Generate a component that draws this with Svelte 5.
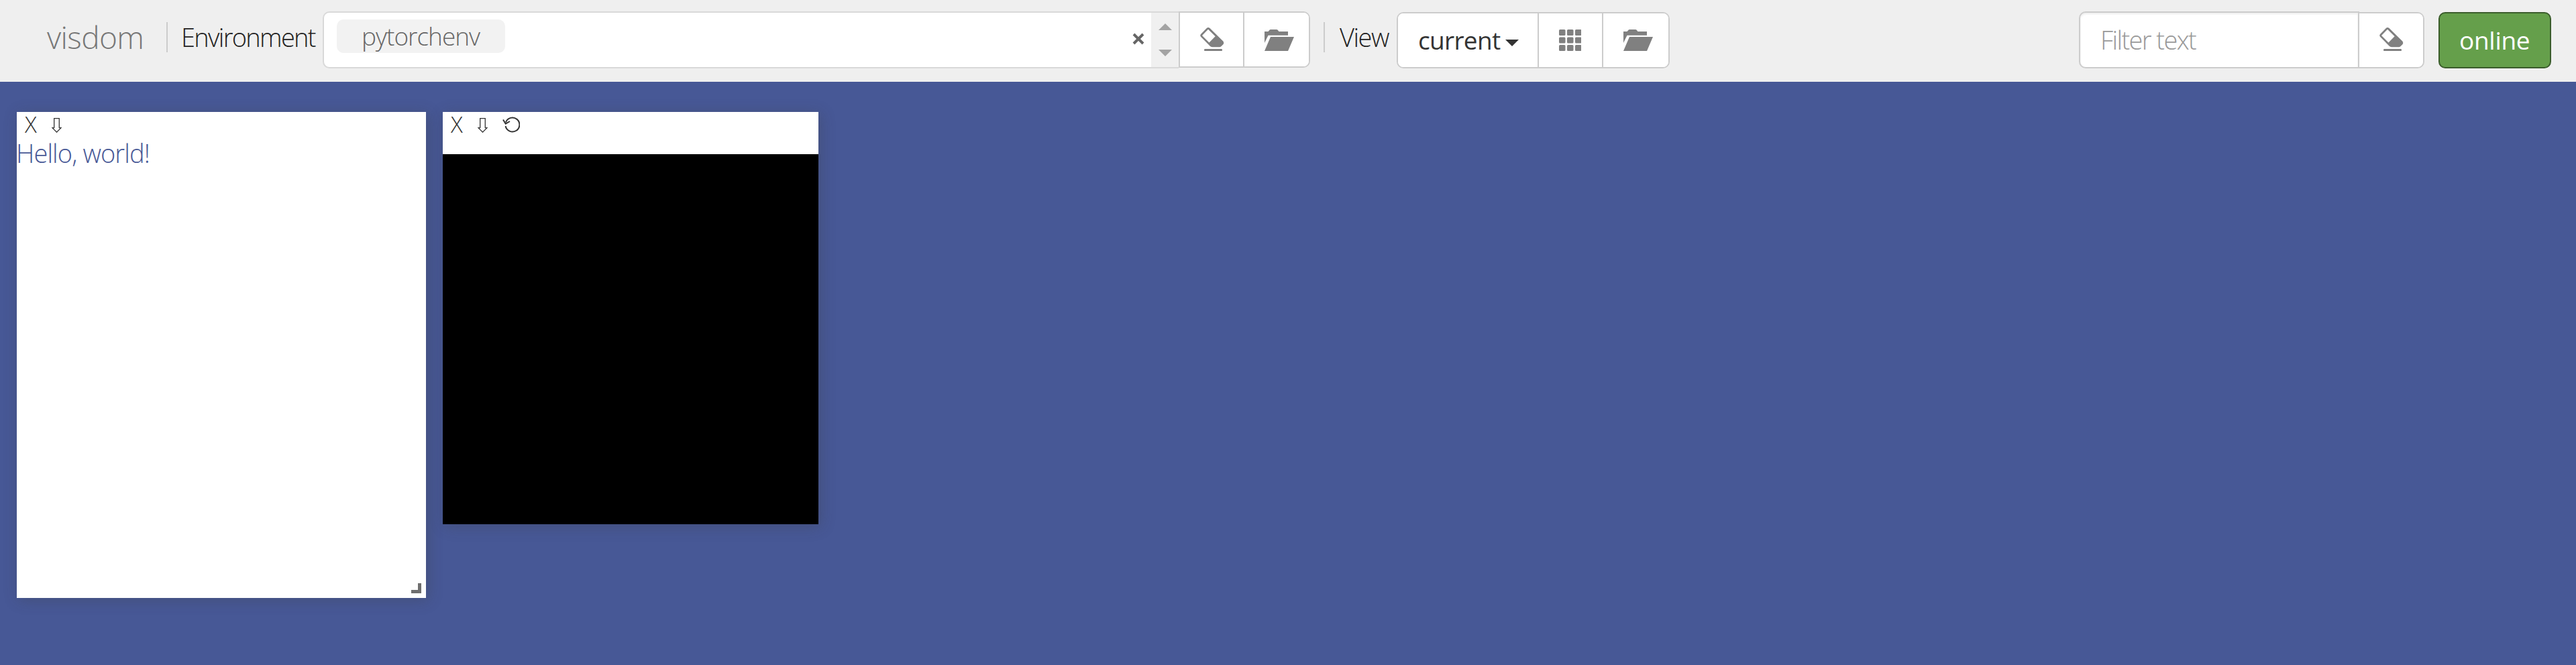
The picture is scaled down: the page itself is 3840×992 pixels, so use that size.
<script>
  const panes = [
    { kind: 'text', text: 'Hello, world!' },
    { kind: 'image', text: '' }
  ];
  const dots = [0, 1, 2];
</script>

{#snippet eraser()}
  <svg class="eraser" viewBox="0 0 36 36" width="36" height="36">
    <path fill="#808080" fill-rule="evenodd" d="M12 0 Q13.3 0 14.5 1 L34.3 20.6 Q36 23 34.6 25 L31 28.5 Q30 29.3 29 29.3 H18 Q16 29 15 28 L1.2 14 Q-.6 12 1 10 L9.8 1 Q11 0 12 0 Z M12 2.7 L3 12 L13.5 22.5 L22.6 13.2 Z" />
    <path fill="#808080" d="M7 32 H32 Q33 32 33 33.500 Q33 35 32 35 H7 Q6 35 6 33.500 Q6 32 7 32 Z" />
  </svg>
{/snippet}

{#snippet folder()}
  <svg class="folder" viewBox="0 0 44 32" width="44" height="32">
    <path fill="#808080" d="M0 3 H5.500 L7.500 .7 Q8 0 9 0 H18 Q19 0 19.700 .8 L21.500 3 H35 V8.700 H5.500 L0 20 Z M9 11 H44 L35 32 H0 Z" />
  </svg>
{/snippet}

<div class="page">
  <header>
    <span class="brand"><span class="t">visdom</span></span>
    <i class="sep"></i>
    <span class="label env"><span class="t">Environment</span></span>
    <div class="select">
      <span class="tag"><span class="t">pytorchenv</span></span>
      <svg class="clear" viewBox="0 0 18 18" width="18" height="18"><path d="M2 2 L16 16 M16 2 L2 16" stroke="#666" stroke-width="4" /></svg>
      <div class="spin">
        <svg viewBox="0 0 20 10" width="20" height="10"><path d="M0 10 L10 0 L20 10 Z" fill="#a3a3a3" /></svg>
        <svg viewBox="0 0 20 10" width="20" height="10"><path d="M0 0 H20 L10 10 Z" fill="#a3a3a3" /></svg>
      </div>
    </div>
    <div class="group first">
      <button class="e">{@render eraser()}</button>
      <button class="f">{@render folder()}</button>
    </div>
    <i class="sep second"></i>
    <span class="label view"><span class="t">View</span></span>
    <div class="group views">
      <button class="cur"><span class="t">current</span><svg viewBox="0 0 20 10" width="20" height="10"><path d="M0 0 H20 L10 10 Z" fill="#333" /></svg></button>
      <button class="g">
        <svg viewBox="0 0 33 32" width="33" height="32">
          {#each dots as r}{#each dots as c}<rect x={c * 12} y={r * 11.5} width="9.500" height="9" rx="1.5" fill="#808080" />{/each}{/each}
        </svg>
      </button>
      <button class="f">{@render folder()}</button>
    </div>
    <div class="filter"><span class="t">Filter text</span></div>
    <div class="group clearfilter"><button class="e">{@render eraser()}</button></div>
    <div class="online"><span class="t">online</span></div>
  </header>
  <main>
    {#each panes as pane}
      <section class={pane.kind}>
        <div class="bar">
          <span class="x">X</span>
          <svg class="down" viewBox="0 0 15 22" width="15" height="22"><path d="M3.700 .7 H11.300 V14.700 H14 L7.500 21.200 L1 14.700 H3.700 Z" fill="none" stroke="#333" stroke-width="1.300" /></svg>
          {#if pane.kind === 'image'}
            <svg class="reset" viewBox="0 0 26 24" width="26" height="24"><path d="M5 8.500 A10.500 10.500 0 1 1 4.600 14" fill="none" stroke="#333" stroke-width="2" /><path d="M1 4.500 L4.700 10.700 L11 7" fill="none" stroke="#333" stroke-width="2" /></svg>
          {/if}
        </div>
        {#if pane.kind === 'text'}
          <p><span class="t">{pane.text}</span></p>
          <i class="grip"></i>
        {:else}
          <div class="canvas"></div>
        {/if}
      </section>
    {/each}
  </main>
</div>

<style>
  :global(body) { margin: 0; background: #475896; }
  .page { width: 3840px; height: 992px; overflow: hidden; background: #475896; font-family: "Open Sans", "Noto Sans", sans-serif; font-weight: 300; color: #333; }
  header { display: flex; align-items: flex-start; height: 122px; background: #efefef; box-sizing: border-box; }
  header *, section, section * { box-sizing: border-box; }
  .t { white-space: nowrap; display: block; }
  svg { display: block; flex: none; }
  .brand { width: 178px; margin-left: 70px; font-size: 46px; line-height: 60px; padding-top: 25px; color: #777; letter-spacing: -.6px; }
  .sep { width: 2px; height: 45px; margin-top: 33px; background: #ccc; }
  .label { font-size: 38px; line-height: 50px; padding-top: 30px; color: #222; }
  .env { width: 231px; padding-left: 20px; letter-spacing: -1.7px; }
  .select { display: flex; width: 1276px; height: 85px; margin-top: 17px; background: #fff; border: 2px solid #d9d9d9; border-right: 0; border-radius: 10px 0 0 10px; }
  .tag { width: 251px; height: 50px; margin: 10px 0 0 19px; background: #f2f2f2; border-radius: 10px; padding-left: 37px; font-size: 37px; line-height: 50px; color: #666; letter-spacing: -1px; }
  .clear { margin: 30px 10px 0 auto; }
  .spin { width: 41px; background: #f0f0f0; display: flex; flex-direction: column; align-items: center; padding-top: 16px; gap: 29px; }
  .group { display: flex; height: 84px; border: 2px solid #ccc; background: #fff; overflow: hidden; }
  button { display: flex; border: 0; border-right: 2px solid #ccc; background: #fff; padding: 0; margin: 0; color: #333; font: inherit; }
  button:last-child { border-right: 0; }
  .first { width: 196px; margin-top: 17px; border-radius: 0 10px 10px 0; }
  .e { width: 97px; padding: 22px 0 0 30px; }
  .f { width: 97px; padding: 25px 0 0 30px; }
  .second { margin-left: 20px; }
  .view { width: 107px; padding-left: 22px; letter-spacing: -1.5px; }
  .views { width: 407px; margin-top: 18px; border-radius: 10px; }
  .views .f { padding-top: 24px; }
  .cur { width: 211px; padding: 15px 0 0 30px; font-size: 37px; line-height: 50px; font-weight: 400; }
  .cur .t { width: 119px; letter-spacing: -.7px; }
  .cur svg { margin: 24px 0 0 11px; }
  .g { width: 97px; padding: 24px 0 0 30px; }
  .filter { width: 418px; height: 85px; margin: 17px 0 0 610px; border: 2px solid #ccc; border-radius: 10px 0 0 10px; background: #fff; box-shadow: inset 0 2px 3px rgba(0,0,0,.08); padding: 15px 0 0 30px; font-size: 38px; line-height: 50px; color: #999; letter-spacing: -1.6px; }
  .clearfilter { width: 97px; margin-top: 18px; border-left: 0; border-radius: 0 10px 10px 0; }
  .clearfilter .e { padding-top: 21px; }
  .online { width: 168px; height: 84px; margin: 18px 0 0 21px; background: #659f4b; border: 2px solid #3a5c2b; border-radius: 10px; color: #fff; font-size: 37px; font-weight: 400; line-height: 50px; padding: 15px 0 0 29px; letter-spacing: -.3px; }
  main { display: flex; align-items: flex-start; gap: 25px; padding: 45px 0 0 25px; }
  section { position: relative; background: #fff; box-shadow: 3px 3px 20px rgba(60,60,60,.3); }
  .text { width: 610px; height: 725px; }
  .image { width: 560px; height: 615px; display: flex; flex-direction: column; }
  .bar { display: flex; height: 36px; padding-left: 12px; }
  .image .bar { height: 63px; }
  .x { width: 40px; font-size: 33px; line-height: 37px; }
  .down { margin-top: 9px; }
  .reset { margin: 7px 0 0 22px; }
  p { margin: 0; padding: 0; text-indent: -1px; font-size: 38px; line-height: 50px; color: #475896; letter-spacing: -.9px; }
  .canvas { flex: 1; background: #000; }
  .grip { position: absolute; right: 7px; bottom: 7px; width: 15px; height: 15px; border: solid #6e6e6e; border-width: 0 5px 5px 0; }
</style>
